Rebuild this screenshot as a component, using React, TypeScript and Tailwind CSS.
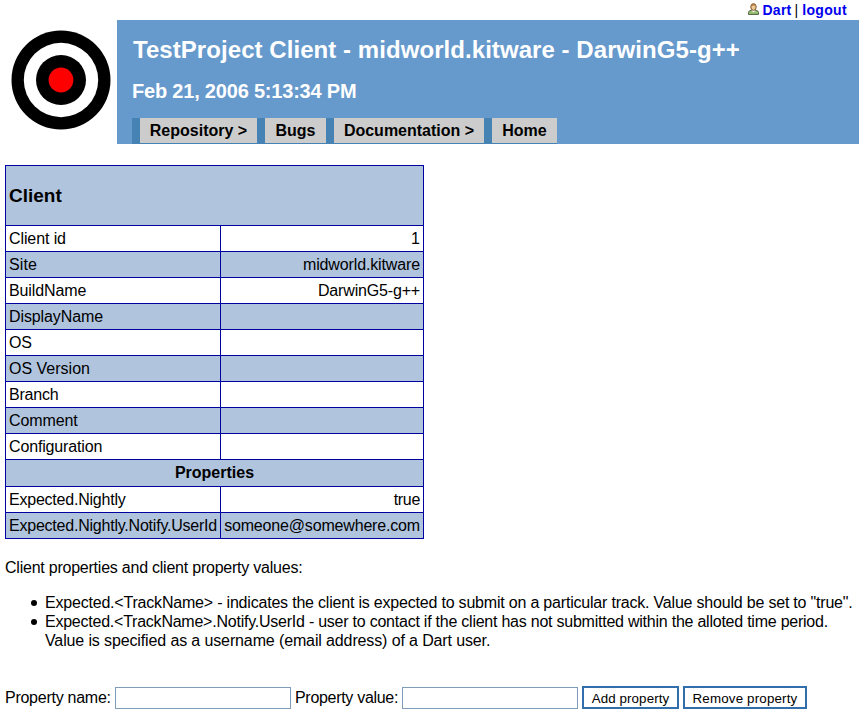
import React from "react";

type RowProps = { label: string; value?: string; shaded?: boolean; labelClass?: string; valueClass?: string };

function Row({ label, value = "", shaded = false, labelClass = "tracking-[-0.1px]", valueClass = "" }: RowProps) {
  return (
    <div className={`flex h-[26px] border-b border-[#0000a0] leading-[25px] ${shaded ? "bg-[#b0c4de]" : "bg-white"}`}>
      <div className={`w-[215px] border-r border-[#0000a0] pl-[3px] whitespace-nowrap ${labelClass}`}>{label}</div>
      <div className={`w-[203px] border-r border-[#0000a0] pr-[3px] text-right whitespace-nowrap ${valueClass}`}>{value}</div>
    </div>
  );
}

function Target() {
  return (
    <svg className="mt-[10px] ml-[11px] block h-[100px] w-[100px]" viewBox="0 0 100 100">
      <circle cx="50" cy="50" r="49.5" fill="#000" />
      <circle cx="50" cy="50" r="37.2" fill="#fff" />
      <circle cx="50" cy="50" r="25" fill="#000" />
      <circle cx="50" cy="50" r="12.4" fill="#f00" />
    </svg>
  );
}

function UserIcon() {
  return (
    <svg className="mt-[3px] mr-[3px] h-[12px] w-[11px]" viewBox="0 0 11 12">
      <path d="M.5 11.4V9.6Q.7 7.6 3 7.2h5q2.3.4 2.5 2.4v1.8z" fill="#9cbf78" stroke="#4d6139" strokeWidth="1" />
      <path d="M3.5 7.2l2 2.4 2-2.4z" fill="#fff" />
      <ellipse cx="5.5" cy="4" rx="2.7" ry="3.3" fill="#f0cb98" stroke="#80542c" strokeWidth="1" />
      <path d="M2.8 3.7Q2.6.5 5.5.5t2.7 3.2Q6.8 2.2 5.3 2.5T2.8 3.7z" fill="#a87945" />
    </svg>
  );
}

function Bullet() {
  return <span className="mt-[7px] mr-[8px] ml-[26px] h-[6px] w-[6px] shrink-0 rounded-full bg-black" />;
}

export default function App() {
  return (
    <div className="h-[718px] w-[867px] overflow-hidden bg-white font-['Liberation_Sans',Arial,sans-serif] text-[16px] text-black">
      <div className="flex h-5 justify-end pr-[20px] text-[14px] leading-[20px] font-bold text-[#0000f0]">
        <UserIcon />
        <a className="tracking-[0.25px]">Dart</a>
        <span className="mr-[4px] ml-[3px] font-normal text-black">|</span>
        <a className="tracking-[0.35px]">logout</a>
      </div>

      <header className="flex h-[124px]">
        <div className="w-[117px]">
          <Target />
        </div>
        <div className="w-[742px] bg-[#6699cc] pl-[15px] font-bold">
          <h1 className="h-[60px] pt-[16px] pl-px text-[24px] leading-[28px] tracking-[0.06px] whitespace-nowrap text-white">
            TestProject Client - midworld.kitware - DarwinG5-g++
          </h1>
          <h2 className="h-[38px] text-[20px] leading-[23px] tracking-[-0.2px] whitespace-nowrap text-white">Feb 21, 2006 5:13:34 PM</h2>
          <nav className="flex h-[26px] w-[425px] gap-2 bg-[#4682b4] pb-px pl-2 text-center leading-[25px] whitespace-nowrap">
            <a className="w-[117px] bg-[#cccccc]">Repository &gt;</a>
            <a className="w-[61px] bg-[#cccccc]">Bugs</a>
            <a className="w-[150px] bg-[#cccccc]">Documentation &gt;</a>
            <a className="w-[65px] bg-[#cccccc]">Home</a>
          </nav>
        </div>
      </header>

      <main className="pl-[5px]">
        <section className="mt-[21px] w-[419px] border-t border-l border-[#0000a0]">
          <h3 className="h-[60px] border-r border-b border-[#0000a0] bg-[#b0c4de] pl-[3px] text-[19px] leading-[59px] font-bold">
            Client
          </h3>
          <Row label="Client id" value="1" />
          <Row label="Site" value="midworld.kitware" shaded labelClass="tracking-[0.1px]" valueClass="tracking-[-0.13px]" />
          <Row label="BuildName" value="DarwinG5-g++" valueClass="tracking-[-0.17px]" />
          <Row label="DisplayName" shaded />
          <Row label="OS" />
          <Row label="OS Version" shaded labelClass="tracking-normal" />
          <Row label="Branch" labelClass="tracking-[-0.2px]" />
          <Row label="Comment" shaded />
          <Row label="Configuration" labelClass="tracking-[-0.15px]" />
          <div className="h-[27px] border-r border-b border-[#0000a0] bg-[#b0c4de] text-center leading-[25px] font-bold">
            Properties
          </div>
          <Row label="Expected.Nightly" value="true" labelClass="tracking-[-0.22px]" valueClass="tracking-[-0.3px]" />
          <Row
            label="Expected.Nightly.Notify.UserId"
            value="someone@somewhere.com"
            shaded
            labelClass="tracking-[-0.22px]"
            valueClass="tracking-[-0.17px]"
          />
        </section>

        <p className="mt-[19px] leading-[19px] tracking-[-0.23px]">Client properties and client property values:</p>
        <ul className="mt-[16px] leading-[19px] whitespace-nowrap">
          <li className="flex tracking-[-0.2px]">
            <Bullet />
            Expected.&lt;TrackName&gt; - indicates the client is expected to submit on a particular track. Value should be set to "true".
          </li>
          <li className="flex">
            <Bullet />
            <div>
              <div className="tracking-[-0.235px]">
                Expected.&lt;TrackName&gt;.Notify.UserId - user to contact if the client has not submitted within the alloted time period.
              </div>
              <div className="tracking-[-0.125px]">Value is specified as a username (email address) of a Dart user.</div>
            </div>
          </li>
        </ul>

        <form className="mt-[36px] flex h-[23px] whitespace-nowrap">
          <label className="w-[110px] leading-[23px] tracking-[-0.26px]">Property name:</label>
          <input className="mt-px h-[22px] w-[176px] border border-[#7f9db9] bg-white" />
          <label className="ml-[4px] w-[107px] leading-[23px] tracking-[-0.3px]">Property value:</label>
          <input className="mt-px h-[22px] w-[176px] border border-[#7f9db9] bg-white" />
          <button type="button" className="ml-[4px] w-[97px] border-2 border-[#316fac] bg-white text-[13.33px] leading-[21px] tracking-[0.1px]">
            Add property
          </button>
          <button type="button" className="ml-[4px] w-[124px] border-2 border-[#316fac] bg-white text-[13.33px] leading-[21px] tracking-[0.18px]">
            Remove property
          </button>
        </form>
      </main>
    </div>
  );
}
